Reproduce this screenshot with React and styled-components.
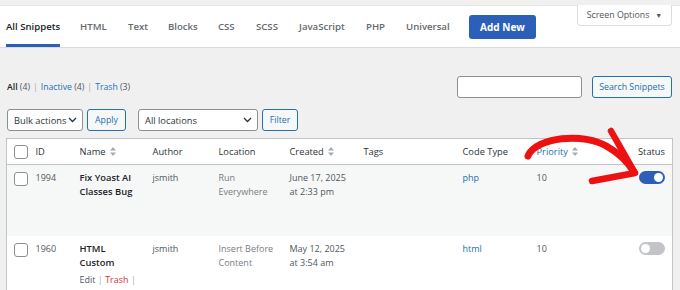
import React, {Fragment} from 'react';
import styled, {createGlobalStyle} from 'styled-components';

const GlobalStyle = createGlobalStyle`
body {
  margin: 0;
  background: #f0f0f1;
  font-family: "Open Sans", "Noto Sans", sans-serif;
  font-size: 9px;
  color: #3c434a;
}
`;

const Page = styled.div`
position: relative;
width: 680px;
height: 290px;
overflow: hidden;
padding-top: 5px;
box-sizing: border-box;
`;//ページ全体

const ScreenOptions = styled.div`
position: absolute;
top: 5px;
right: 8px;
width: 95px;
height: 21px;
box-sizing: border-box;
background: #fff;
border: 1px solid #dcdcde;
border-top: none;
border-radius: 0 0 4px 4px;
display: flex;
align-items: center;
justify-content: center;
gap: 6px;
color: #50575e;
font-size: 8.8px;
`;

const Header = styled.div`
height: 43px;
background: #fff;
border-top: 1px solid #e4e4e6;
border-bottom: 1px solid #dcdcde;
box-sizing: border-box;
display: flex;
align-items: stretch;
padding-left: 6px;
`;//タブとAdd Newボタン

const Tab = styled.div`
width: ${p => p.w}px;
display: flex;
align-items: stretch;
font-weight: 600;
font-size: 9.6px;
color: ${p => p.active ? '#1d2327' : '#646970'};
`;

const TabLabel = styled.span`
display: flex;
align-items: center;
padding-top: 3px;
border-bottom: 3px solid ${p => p.active ? '#2c5fb8' : 'transparent'};
`;

const AddNew = styled.div`
align-self: center;
width: 67px;
height: 24px;
border-radius: 3px;
background: #2c5fb8;
color: #fff;
font-weight: 700;
font-size: 10px;
display: flex;
align-items: center;
justify-content: center;
`;

const Content = styled.div`
padding: 0 8px 0 6px;
`;

const TopRow = styled.div`
display: flex;
align-items: center;
justify-content: space-between;
margin-top: 28px;
height: 22px;
`;

const Views = styled.div`
padding-left: 1px;
color: #50575e;
font-size: 8.7px;
b { color: #1d2327; font-weight: 600; }
a { color: #2271b1; text-decoration: none; }
span.sep { color: #a7aaad; margin: 0 3px; }
`;

const SearchBox = styled.div`
display: flex;
gap: 10px;
`;

const Input = styled.div`
width: 125px;
height: 22px;
box-sizing: border-box;
background: #fff;
border: 1px solid #8c8f94;
border-radius: 3px;
`;

const Button = styled.div`
width: ${p => p.w}px;
height: 22px;
box-sizing: border-box;
border: 1px solid #2271b1;
border-radius: 3px;
background: #f6f7f7;
color: #2271b1;
font-size: 8.8px;
display: flex;
align-items: center;
justify-content: center;
`;

const Filters = styled.div`
display: flex;
align-items: center;
margin-top: 11px;
margin-left: 1px;
height: 22px;
`;

const Select = styled.div`
width: ${p => p.w}px;
height: 22px;
box-sizing: border-box;
border: 1px solid #8c8f94;
border-radius: 3px;
background: #fff;
color: #2c3338;
font-size: 9.3px;
white-space: nowrap;
display: flex;
align-items: center;
justify-content: space-between;
padding: 0 5px 0 6px;
margin: 0 4px 0 ${p => p.ml || 0}px;
`;

const Table = styled.table`
margin-top: 7px;
width: 666px;
border-collapse: collapse;
table-layout: fixed;
background: #fff;
border: 1px solid #c3c4c7;
`;

const Th = styled.th`
height: 26px;
box-sizing: border-box;
text-align: ${p => p.right ? 'right' : 'left'};
padding: 0 ${p => p.right ? 7 : 0}px 0 5px;
font-weight: 400;
font-size: 9.3px;
color: ${p => p.color || '#2c3338'};
border-bottom: 1px solid #c3c4c7;
white-space: nowrap;
`;

const Row = styled.tr`
background: ${p => p.striped ? '#f6f7f7' : '#fff'};
height: ${p => p.h}px;
`;

const Td = styled.td`
vertical-align: top;
padding: 6px ${p => p.right ? 7 : 10}px 0 5px;
text-align: ${p => p.right ? 'right' : 'left'};
line-height: 14px;
font-size: ${p => p.bold ? 9.4 : 9}px;
color: ${p => p.color || '#50575e'};
font-weight: ${p => p.bold ? 600 : 400};
`;

const Check = styled.div`
width: 12px;
height: 12px;
border: 1px solid #8c8f94;
border-radius: 3px;
background: #fff;
margin-left: 2px;
margin-top: ${p => p.mt}px;
`;

const SortIcon = styled.svg`
margin-left: 4px;
vertical-align: -1px;
`;

const RowActions = styled.div`
color: #50575e;
font-weight: 400;
font-size: 9px;
margin-top: 3px;
a { color: #d63638; text-decoration: none; }
span { color: #a7aaad; }
`;

const Toggle = styled.div`
display: inline-block;
position: relative;
width: 26px;
height: 13px;
border-radius: 7px;
background: ${p => p.on ? '#2c5fb8' : '#c3c4c7'};
&::after {
  content: '';
  position: absolute;
  top: 2px;
  left: ${p => p.on ? 15 : 2}px;
  width: 9px;
  height: 9px;
  border-radius: 50%;
  background: #fff;
}
`;

const Arrow = styled.svg`
position: absolute;
left: 0;
top: 0;
pointer-events: none;
`;

const Chevron = () => (
  <svg width="9" height="6" viewBox="0 0 9 6"><path d="M1 1l3.5 3.5L8 1" fill="none" stroke="#2c3338" strokeWidth="1.3"/></svg>
);

const Sort = () => (
  <SortIcon width="6" height="9" viewBox="0 0 6 9">
    <path d="M0 3.5L3 0l3 3.5zM0 5.5L3 9l3-3.5z" fill="#a7aaad" />
  </SortIcon>
);

const tabs = [
  ['All Snippets', 74, true],
  ['HTML', 48],
  ['Text', 40],
  ['Blocks', 50],
  ['CSS', 38],
  ['SCSS', 43],
  ['JavaScript', 67],
  ['PHP', 40],
  ['Universal', 63],
];

const cols = [24, 44, 73, 66, 71, 74, 99, 74, 69, 72];

export default function App() {
  return (
    <Fragment>
      <GlobalStyle />
      <Page>
        <Header>
          {tabs.map(([t, w, a]) => (
            <Tab key={t} w={w} active={a}><TabLabel active={a}>{t}</TabLabel></Tab>
          ))}
          <AddNew>Add New</AddNew>
        </Header>
        <ScreenOptions>Screen Options <span style={{fontSize: 7}}>▼</span></ScreenOptions>
        <Content>
          <TopRow>
            <Views>
              <b>All</b> (4)<span className="sep">|</span><a>Inactive</a> (4)<span className="sep">|</span><a>Trash</a> (3)
            </Views>
            <SearchBox>
              <Input />
              <Button w={80}>Search Snippets</Button>
            </SearchBox>
          </TopRow>
          <Filters>
            <Select w={76}>Bulk actions <Chevron /></Select>
            <Button w={39}>Apply</Button>
            <Select w={120} ml={12}>All locations <Chevron /></Select>
            <Button w={36}>Filter</Button>
          </Filters>
          <Table>
            <colgroup>{cols.map((w, i) => <col key={i} style={{width: w}} />)}</colgroup>
            <thead>
              <tr>
                <Th><Check mt={0} /></Th>
                <Th>ID</Th>
                <Th>Name<Sort /></Th>
                <Th>Author</Th>
                <Th>Location</Th>
                <Th>Created<Sort /></Th>
                <Th>Tags</Th>
                <Th>Code Type</Th>
                <Th color="#2271b1">Priority<Sort /></Th>
                <Th right>Status</Th>
              </tr>
            </thead>
            <tbody>
              <Row striped h={71}>
                <Td><Check mt={1} /></Td>
                <Td>1994</Td>
                <Td bold color="#1d2327">Fix Yoast AI Classes Bug</Td>
                <Td>jsmith</Td>
                <Td color="#787c82">Run Everywhere</Td>
                <Td>June 17, 2025 at 2:33 pm</Td>
                <Td />
                <Td color="#2271b1">php</Td>
                <Td>10</Td>
                <Td right><Toggle on /></Td>
              </Row>
              <Row h={60}>
                <Td><Check mt={1} /></Td>
                <Td>1960</Td>
                <Td bold color="#1d2327">
                  HTML Custom
                  <RowActions>Edit <span>|</span> <a>Trash</a> <span>|</span></RowActions>
                </Td>
                <Td>jsmith</Td>
                <Td color="#787c82">Insert Before Content</Td>
                <Td>May 12, 2025 at 3:54 am</Td>
                <Td />
                <Td color="#2271b1">html</Td>
                <Td>10</Td>
                <Td right><Toggle /></Td>
              </Row>
            </tbody>
          </Table>
        </Content>
        <Arrow width="680" height="290" viewBox="0 0 680 290">
          <g fill="none" stroke="#ee1111" strokeLinecap="round" strokeLinejoin="round">
            <path d="M528 156 C536 137 584 132 608 147 C620 154 629 164 634 172" strokeWidth="7" />
            <path d="M611 131 L635 173 L592 181" strokeWidth="6.5" />
          </g>
        </Arrow>
      </Page>
    </Fragment>
  );
}
